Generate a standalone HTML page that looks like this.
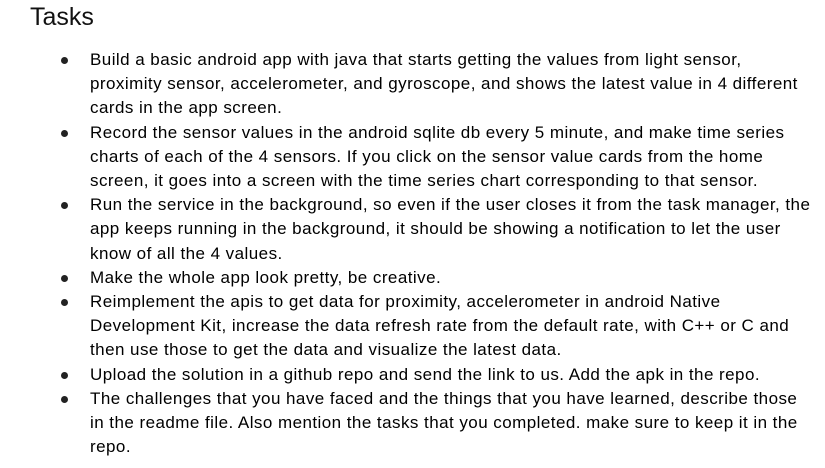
<!DOCTYPE html>
<html><head><style>
body{margin:0;background:#fff;width:825px;height:468px;overflow:hidden;font-family:"Liberation Sans",Arial,sans-serif;color:#000}
h1{position:absolute;left:30px;top:3px;margin:0;font-size:25px;font-weight:normal;color:#111}
ul{position:absolute;left:0;top:48px;margin:0;padding:0;list-style:none}
li{position:relative;padding-left:90px;font-size:17px;letter-spacing:0.45px;line-height:24.2px;white-space:nowrap}
li:before{content:"";position:absolute;left:61px;top:9px;width:7px;height:7px;border-radius:50%;background:#222}
</style></head><body>
<h1>Tasks</h1>
<ul>
<li>Build a basic android app with java that starts getting the values from light sensor,<br>proximity sensor, accelerometer, and gyroscope, and shows the latest value in 4 different<br>cards in the app screen.</li>
<li>Record the sensor values in the android sqlite db every 5 minute, and make time series<br>charts of each of the 4 sensors. If you click on the sensor value cards from the home<br>screen, it goes into a screen with the time series chart corresponding to that sensor.</li>
<li>Run the service in the background, so even if the user closes it from the task manager, the<br>app keeps running in the background, it should be showing a notification to let the user<br>know of all the 4 values.</li>
<li>Make the whole app look pretty, be creative.</li>
<li>Reimplement the apis to get data for proximity, accelerometer in android Native<br>Development Kit, increase the data refresh rate from the default rate, with C++ or C and<br>then use those to get the data and visualize the latest data.</li>
<li>Upload the solution in a github repo and send the link to us. Add the apk in the repo.</li>
<li>The challenges that you have faced and the things that you have learned, describe those<br>in the readme file. Also mention the tasks that you completed. make sure to keep it in the<br>repo.</li>
</ul>
</body></html>
